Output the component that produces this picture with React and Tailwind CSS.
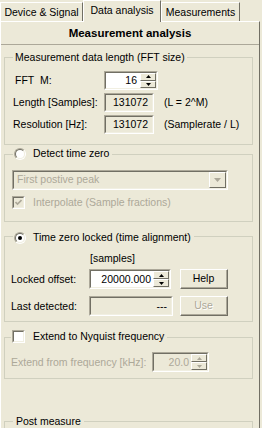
import React from "react";

function Sunken({ className = "", inner = "bg-white", children }) {
  return (
    <div className={`border border-t-[#ACA899] border-l-[#ACA899] border-b-white border-r-white ${className}`}>
      <div className={`flex h-full w-full items-center border border-t-[#716F64] border-l-[#716F64] border-b-[#F1EFE2] border-r-[#F1EFE2] ${inner}`}>
        {children}
      </div>
    </div>
  );
}

function SpinArrows({ disabled }) {
  const fill = disabled ? "#ACA899" : "#000";
  return (
    <div className="flex h-full w-[16px] flex-col">
      {["up", "down"].map((d) => (
        <div
          key={d}
          className="flex flex-1 items-center justify-center border border-t-white border-l-white border-b-[#716F64] border-r-[#716F64] bg-[#ECE9D8]"
        >
          <svg width="5" height="3" viewBox="0 0 5 3">
            <path d={d === "up" ? "M2.5 0L5 3L0 3Z" : "M0 0L5 0L2.5 3Z"} fill={fill} />
          </svg>
        </div>
      ))}
    </div>
  );
}

function Button({ children, disabled }) {
  return (
    <div className="h-[20px] w-[48px] border border-t-white border-l-white border-b-[#716F64] border-r-[#716F64]">
      <div
        className={`flex h-full w-full items-center justify-center border-r border-b border-r-[#ACA899] border-b-[#ACA899] ${
          disabled ? "text-[#ACA899] [text-shadow:1px_1px_0_#fff]" : "text-black"
        }`}
      >
        {children}
      </div>
    </div>
  );
}

function Radio({ checked }) {
  return (
    <span className="inline-flex h-[12px] w-[12px] rounded-full border border-t-[#ACA899] border-l-[#ACA899] border-b-white border-r-white">
      <span className="flex h-full w-full items-center justify-center rounded-full border border-t-[#716F64] border-l-[#716F64] border-b-[#F1EFE2] border-r-[#F1EFE2] bg-white">
        {checked && <span className="h-[4px] w-[4px] rounded-full bg-black" />}
      </span>
    </span>
  );
}

function Checkbox({ checked, disabled }) {
  return (
    <span className="inline-flex h-[13px] w-[13px] border border-t-[#ACA899] border-l-[#ACA899] border-b-white border-r-white">
      <span
        className={`flex h-full w-full items-center justify-center border border-t-[#716F64] border-l-[#716F64] border-b-[#F1EFE2] border-r-[#F1EFE2] ${
          disabled ? "bg-[#ECE9D8]" : "bg-white"
        }`}
      >
        {checked && (
          <svg width="7" height="7" viewBox="0 0 7 7">
            <path d="M0.5 3L2.5 5L6.5 1" stroke={disabled ? "#ACA899" : "#000"} strokeWidth="1.6" fill="none" />
          </svg>
        )}
      </span>
    </span>
  );
}

function Tab({ label, selected, width }) {
  if (selected) {
    return (
      <div className={`relative z-10 -mb-px flex h-[22px] ${width} justify-center border-t border-l border-r border-t-white border-l-white border-r-[#716F64] bg-[#ECE9D8] pt-[3px]`}>
        {label}
      </div>
    );
  }
  return (
    <div className={`flex h-[19px] ${width} justify-center border-t border-l border-r border-t-white border-l-white border-r-[#716F64] pt-[3px]`}>
      {label}
    </div>
  );
}

export default function App() {
  return (
    <div className="h-[428px] w-[262px] overflow-hidden bg-[#ECE9D8] font-['Liberation_Sans',Arial,sans-serif] text-[10.5px] leading-[13px] text-black">
      <div className="flex h-[21px] items-end">
        <Tab label="Device & Signal" width="w-[83px]" />
        <Tab label="Data analysis" width="w-[78px]" selected />
        <Tab label="Measurements" width="w-[79px]" />
      </div>

      <div className="h-[407px] w-[260px] border-t border-l border-r border-t-white border-l-white border-r-[#716F64]">
        <div className="flex h-[23px] items-center justify-center border-b border-b-[#ACA899] text-[11.5px] font-bold">
          Measurement analysis
        </div>

        <div className="flex flex-col">
          <fieldset className="ml-[3px] mt-[6px] w-[249px] border border-[#D0D0BF] pb-[10px]">
            <legend className="ml-[8px] px-[2px]">Measurement data length (FFT size)</legend>
            <div className="mt-[7px] flex flex-col gap-[3px] pl-[8px]">
              <div className="flex h-[19px] items-center">
                <span className="w-[91px] whitespace-pre pl-[2px]">FFT  M:</span>
                <Sunken className="h-[19px] w-[54px]">
                  <span className="flex-1 pr-[3px] text-right">16</span>
                  <SpinArrows />
                </Sunken>
              </div>
              <div className="flex h-[19px] items-center">
                <span className="w-[91px]">Length [Samples]:</span>
                <Sunken className="h-[19px] w-[50px]" inner="bg-[#ECE9D8]">
                  <span className="flex-1 pr-[4px] text-right">131072</span>
                </Sunken>
                <span className="ml-[10px]">(L = 2^M)</span>
              </div>
              <div className="flex h-[19px] items-center">
                <span className="w-[91px]">Resolution [Hz]:</span>
                <Sunken className="h-[19px] w-[50px]" inner="bg-[#ECE9D8]">
                  <span className="flex-1 pr-[4px] text-right">131072</span>
                </Sunken>
                <span className="ml-[10px]">(Samplerate / L)</span>
              </div>
            </div>
          </fieldset>

          <fieldset className="ml-[3px] mt-[2px] w-[249px] border border-[#D0D0BF] pb-[12px]">
            <legend className="ml-[8px] px-[1px]">
              <span className="inline-flex items-center gap-[7px] pr-[2px]">
                <Radio />
                <span>Detect time zero</span>
              </span>
            </legend>
            <div className="flex flex-col pl-[7px]">
              <Sunken className="mt-[8px] h-[20px] w-[216px]" inner="bg-[#ECE9D8]">
                <span className="flex-1 pl-[3px] text-[#ACA899]">First postive peak</span>
                <div className="flex h-full w-[17px] items-center justify-center border border-t-white border-l-white border-b-[#716F64] border-r-[#716F64]">
                  <svg width="7" height="4" viewBox="0 0 7 4">
                    <path d="M0 0L7 0L3.5 4Z" fill="#ACA899" />
                  </svg>
                </div>
              </Sunken>
              <div className="mt-[6px] flex h-[13px] items-center gap-[8px]">
                <Checkbox checked disabled />
                <span className="text-[#ACA899]">Interpolate (Sample fractions)</span>
              </div>
            </div>
          </fieldset>

          <fieldset className="ml-[3px] mt-[8px] w-[249px] border border-[#D0D0BF] pb-[5px]">
            <legend className="ml-[8px] px-[1px]">
              <span className="inline-flex items-center gap-[7px] pr-[2px]">
                <Radio checked />
                <span>Time zero locked (time alignment)</span>
              </span>
            </legend>
            <div className="flex flex-col pl-[6px]">
              <span className="ml-[79px] mt-[8px]">[samples]</span>
              <div className="mt-[4px] flex h-[20px] items-center">
                <span className="w-[78px]">Locked offset:</span>
                <Sunken className="h-[20px] w-[82px]">
                  <span className="flex-1 pr-[2px] text-right">20000.000</span>
                  <SpinArrows />
                </Sunken>
                <div className="ml-[9px]">
                  <Button>Help</Button>
                </div>
              </div>
              <div className="mt-[7px] flex h-[20px] items-center">
                <span className="w-[78px]">Last detected:</span>
                <Sunken className="h-[20px] w-[84px]" inner="bg-[#ECE9D8]">
                  <span className="flex-1 pr-[4px] text-right">---</span>
                </Sunken>
                <div className="ml-[7px]">
                  <Button disabled>Use</Button>
                </div>
              </div>
            </div>
          </fieldset>

          <fieldset className="ml-[3px] mt-[8px] w-[249px] border border-[#D0D0BF] pb-[6px]">
            <legend className="ml-[6px] px-[1px]">
              <span className="inline-flex items-center gap-[8px] pr-[2px]">
                <Checkbox />
                <span>Extend to Nyquist frequency</span>
              </span>
            </legend>
            <div className="mt-[7px] flex h-[20px] items-center pl-[6px]">
              <span className="w-[141px] text-[#ACA899]">Extend from frequency [kHz]:</span>
              <Sunken className="h-[20px] w-[57px]" inner="bg-[#ECE9D8]">
                <span className="flex-1 pr-[2px] text-right text-[#ACA899]">20.0</span>
                <SpinArrows disabled />
              </Sunken>
            </div>
          </fieldset>

          <fieldset className="ml-[3px] mt-[36px] h-[60px] w-[249px] border border-[#D0D0BF]">
            <legend className="ml-[8px] px-[3px]">Post measure</legend>
          </fieldset>
        </div>
      </div>
    </div>
  );
}
